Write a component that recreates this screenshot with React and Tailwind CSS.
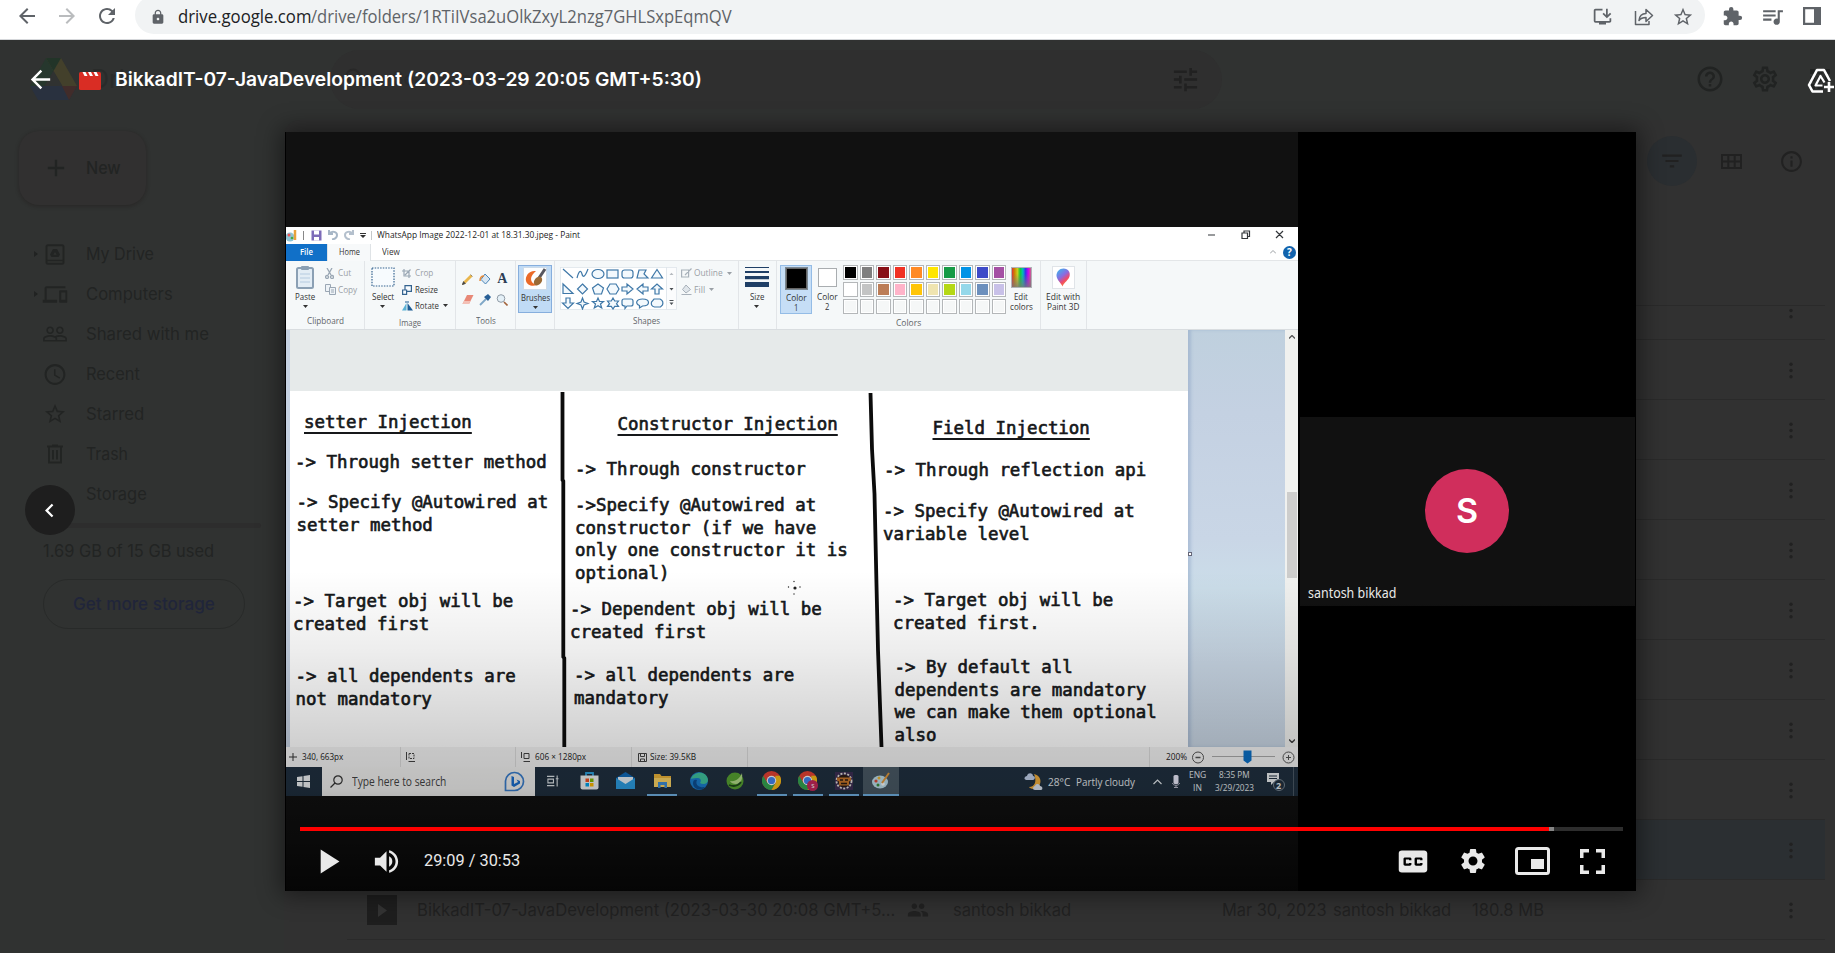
import React, { useLayoutEffect, useRef, useState } from "react";
import {
  MdArrowBack, MdArrowForward, MdRefresh, MdLock, MdInstallDesktop, MdStarBorder, MdExtension,
  MdQueueMusic, MdTune, MdHelpOutline, MdOutlineSettings, MdFilterList, MdInfoOutline,
  MdOutlineDevices, MdPeopleOutline, MdAccessTime, MdPeople, MdClosedCaption, MdSettings,
  MdVolumeUp, MdPlayArrow, MdSearch, MdChevronLeft, MdAdd, MdApps, MdCloudQueue,
} from "react-icons/md";

/* One line of text squeezed or widened to a given width. */
function Fit({ w, className = "", children }) {
  const ref = useRef(null);
  const [k, setK] = useState(1);
  useLayoutEffect(() => {
    if (ref.current) setK(w / ref.current.offsetWidth);
  }, [w]);
  return (
    <span className={"inline-block shrink-0 whitespace-pre " + className} style={{ width: w }}>
      <span ref={ref} className="inline-block origin-left whitespace-pre" style={{ transform: `scaleX(${k})` }}>
        {children}
      </span>
    </span>
  );
}

/* ---------- Browser toolbar ---------- */
function BrowserBar() {
  return (
    <div className="flex h-10 w-full shrink-0 border-b border-[#d5d7da] bg-white text-[#5f6368]">
      <div className="flex h-[32px] items-center gap-4 pl-[15px]">
        <MdArrowBack className="size-6" />
        <MdArrowForward className="size-6 text-[#babcbe]" />
        <MdRefresh className="size-6" />
      </div>
      <div className="-mt-1 ml-4 flex h-[38px] w-[1570px] items-center rounded-full bg-[#f1f3f4] pl-[15px] pt-[3px]">
        <MdLock className="size-[16px]" />
        <div className="ml-3 flex flex-1 items-center font-['Open_Sans',sans-serif] text-[17.500px] leading-none">
          <Fit w={133} className="text-[#202124]">drive.google.com</Fit>
          <Fit w={421}>/drive/folders/1RTiIVsa2uOlkZxyL2nzg7GHLSxpEqmQV</Fit>
        </div>
        <MdInstallDesktop className="size-[21px]" />
        <svg className="ml-5 size-[21px]" viewBox="0 0 21 21" fill="none" stroke="currentColor" strokeWidth="1.500" strokeLinejoin="round">
          <path d="M2.500 5v13.500H16V15" />
          <path d="M6 14.500c.5-5 3-7 7-7V3.500l6.500 6-6.500 6v-4c-3.500 0-5.500 1-7 3z" />
        </svg>
        <MdStarBorder className="ml-[18px] mr-[11px] size-[22px]" />
      </div>
      <div className="flex h-[32px] items-center pl-[17px]">
        <MdExtension className="size-[21px]" />
        <MdQueueMusic className="ml-[17px] size-[25px]" />
        <svg className="ml-[18px] size-[18px]" viewBox="0 0 18 18">
          <path fillRule="evenodd" fill="currentColor" d="M0 0h18v18H0zM2.200 2.200v13.600h8.800V2.200z" />
        </svg>
      </div>
    </div>
  );
}

/* ---------- Dimmed Drive page ---------- */
function DriveLogo() {
  return (
    <svg className="h-[42px] w-[47px]" viewBox="0 0 47 42">
      <path d="M16 0L0 28h14.500L31 0z" fill="#26372d" />
      <path d="M16 0h15l16 28H32z" fill="#43402b" />
      <path d="M31 0L23.500 13 16 0z" fill="#223428" />
      <path d="M0 28h47l-8 14H8z" fill="#29313f" />
      <path d="M32 28h15l-8 14z" fill="#412c2a" />
      <path d="M23.500 13l9 15h-18z" fill="#303231" />
    </svg>
  );
}

function NavItem({ icon, label, w, caret }) {
  return (
    <div className="flex h-10 items-center">
      <div className="w-[10px]">
        {caret && <svg className="h-[6px] w-[4px]" viewBox="0 0 4 6"><path d="M0 0l4 3-4 3z" fill="#212322" /></svg>}
      </div>
      <div className="flex w-[42px] items-center pl-[11px] [&>svg]:-translate-x-1/2">
        {icon}
      </div>
      <Fit w={w} className="leading-none">{label}</Fit>
    </div>
  );
}

function Sidebar() {
  return (
    <div className="w-[284px] shrink-0 pt-[11px] font-['Inter',sans-serif] text-[17px] text-[#222423]">
      <div className="ml-[19px] flex h-[74px] w-[127px] items-center rounded-[20px] bg-[#313030] pl-[23px] shadow-[0_1px_4px_rgba(20,10,10,0.3)]">
        <MdAdd className="size-[28px]" />
        <Fit w={35} className="ml-[16px] font-medium leading-none">New</Fit>
      </div>
      <div className="mt-[29px] pl-[34px]">
        <NavItem caret label="My Drive" w={68} icon={
          <svg className="size-[21px]" viewBox="0 0 21 21" fill="none" stroke="currentColor" strokeWidth="2">
            <rect x="2" y="1.200" width="17" height="18.600" rx="1.500" /><path d="M2 16.500h17" strokeWidth="1.500" /><path d="M8.500 5h4l3 5.500-1.500 2.500H7l-1.500-2.500z" fill="currentColor" stroke="none" /><path d="M10.500 8l1.600 2.700H8.900z" fill="#303231" stroke="none" />
          </svg>} />
        <NavItem caret label="Computers" w={87} icon={<MdOutlineDevices className="size-[25px]" />} />
        <NavItem label="Shared with me" w={123} icon={<MdPeopleOutline className="size-[26px]" />} />
        <NavItem label="Recent" w={54} icon={<MdAccessTime className="size-[25px]" />} />
        <NavItem label="Starred" w={58} icon={<MdStarBorder className="size-[24px]" />} />
        <NavItem label="Trash" w={42} icon={
          <svg className="size-[20px]" viewBox="0 0 20 20" fill="none" stroke="currentColor" strokeWidth="1.800">
            <path d="M2 2.500h16M7 1.500h6M4 3v15.500h12V3M8 6v9.500M12 6v9.500" />
          </svg>} />
        <NavItem label="Storage" w={61} icon={<MdCloudQueue className="size-[24px]" />} />
      </div>
      <div className="ml-[43px] mt-[9px] h-[5px] w-[218px] rounded-full bg-[#2d2d2d]" />
      <div className="ml-[43px] mt-[15px] leading-none"><Fit w={171}>1.69 GB of 15 GB used</Fit></div>
      <div className="ml-[43px] mt-[19px] flex h-[50px] w-[202px] items-center justify-center rounded-full border border-[#282a29] text-[#20253a]">
        <Fit w={142} className="font-medium leading-none">Get more storage</Fit>
      </div>
    </div>
  );
}

function Dots() {
  return (
    <svg className="h-[17px] w-[4px]" viewBox="0 0 4 17" fill="#212121">
      <circle cx="2" cy="2.200" r="1.700" /><circle cx="2" cy="8.500" r="1.700" /><circle cx="2" cy="14.800" r="1.700" />
    </svg>
  );
}

function FileRow({ selected, children }) {
  return (
    <div className={"flex h-[60px] shrink-0 items-center justify-end border-b border-[#2a2a2a] pr-[32px] pt-px " + (selected ? "bg-[#2b2f32]" : "")}>
      {children}
      <Dots />
    </div>
  );
}

function DrivePage() {
  return (
    <div className="flex h-full w-full flex-col bg-[#303231]">
      <div className="flex h-20 shrink-0 items-center pb-[2px] text-[#212322]">
        <div className="ml-[30px] flex w-[300px] items-center font-['Inter',sans-serif]">
          <DriveLogo />
          <span className="ml-[14px] text-[25px] leading-none text-[#292b2a]">Drive</span>
        </div>
        <div className="flex h-[59px] w-[892px] items-center rounded-full bg-[#2f2f2f] font-['Inter',sans-serif] text-[18px] text-[#282828]">
          <MdSearch className="ml-[12px] size-[28px]" />
          <span className="ml-[22px] leading-none text-[#2a2a2a]">Search in Drive</span>
          <MdTune className="ml-auto mr-[21px] size-[31px] text-[#212121]" />
        </div>
        <MdHelpOutline className="ml-[473px] size-[30px]" />
        <MdOutlineSettings className="ml-[25px] size-[30px]" />
        <MdApps className="ml-[25px] size-[30px]" />
      </div>
      <div className="flex min-h-0 flex-1">
        <Sidebar />
        <div className="flex flex-1 flex-col overflow-hidden rounded-tl-2xl bg-[#313131] pl-[63px] pr-[10px]">
          <div className="h-[186px] shrink-0 border-b border-[#2a2a2a] pt-4">
            <div className="flex items-center justify-end pr-[21px] text-[#212121]">
              <div className="flex size-[50px] items-center justify-center rounded-full bg-[#2a2e31]">
                <MdFilterList className="size-[26px]" />
              </div>
              <svg className="ml-[24px] h-[15px] w-[21px]" viewBox="0 0 21 15" fill="none" stroke="currentColor" strokeWidth="2">
                <path d="M1 1h19v13H1zM1 7.500h19M7.300 1v13M13.700 1v13" />
              </svg>
              <MdInfoOutline className="ml-[37px] size-[25px]" />
            </div>
          </div>
          <div className="flex h-[34px] shrink-0 flex-col justify-end overflow-hidden"><FileRow /></div>
          {[0, 1, 2, 3, 4, 5, 6, 7].map((i) => <FileRow key={i} />)}
          <FileRow selected />
          <FileRow>
            <div className="flex flex-1 items-center pl-5 font-['Inter',sans-serif] text-[17px] leading-none text-[#212121]">
              <div className="flex size-[30px] items-center justify-center bg-[#1e1e1e]">
                <svg className="h-[13px] w-[9px]" viewBox="0 0 9 13"><path d="M0 0l9 6.500L0 13z" fill="#333" /></svg>
              </div>
              <Fit w={478} className="ml-[20px]">BikkadIT-07-JavaDevelopment (2023-03-30 20:08 GMT+5...</Fit>
              <MdPeople className="ml-[12px] size-[22px]" />
              <Fit w={118} className="ml-[24px]">santosh bikkad</Fit>
              <Fit w={105} className="ml-[151px]">Mar 30, 2023</Fit>
              <Fit w={118} className="ml-[6px]">santosh bikkad</Fit>
              <Fit w={72} className="ml-[21px]">180.8 MB</Fit>
            </div>
          </FileRow>
        </div>
      </div>
    </div>
  );
}

/* ---------- Paint window ---------- */
function Caret({ className = "" }) {
  return <svg className={"h-[3px] w-[5px] " + className} viewBox="0 0 5 3"><path d="M0 0h5L2.500 3z" fill="currentColor" /></svg>;
}

function Big({ icon, lines, caret, className = "" }) {
  return (
    <div className={"flex flex-col items-center " + className}>
      <div className="flex h-[24px] items-center">{icon}</div>
      <div className="mt-[3px] flex flex-col items-center">
        {lines.map(([t, w]) => <Fit key={t} w={w} className="h-[10px] leading-[10px]">{t}</Fit>)}
      </div>
      {caret && <Caret className="mt-[3px]" />}
    </div>
  );
}

function Small({ icon, label, w, caret, dim }) {
  return (
    <div className={"flex h-[16.400px] items-center " + (dim ? "text-[#9aa0a6]" : "")}>
      <div className="flex w-[13px] shrink-0 items-center">{icon}</div>
      <Fit w={w} className="leading-none">{label}</Fit>
      {caret && <Caret className="ml-[4px]" />}
    </div>
  );
}

function Group({ w, label, lw, children }) {
  return (
    <div className={"flex shrink-0 flex-col border-r border-[#e2e5e8] pt-[4px] " + w}>
      <div className="flex h-[48px]">{children}</div>
      <div className="mt-[2px] flex h-[16px] shrink-0 items-center justify-center text-[#5f6468]">
        {label && <Fit w={lw} className="leading-none">{label}</Fit>}
      </div>
    </div>
  );
}

function ShapesGallery() {
  return (
    <svg className="h-[43px] w-[117px]" viewBox="0 0 117 43" fill="#f3f9fd" stroke="#3f78a8" strokeWidth="1.200">
      <rect x=".5" y=".5" width="106" height="42" fill="#fff" stroke="#dfe5ea" strokeWidth=".8" />
      <rect x="106.500" y=".5" width="10" height="42" fill="#fbfcfd" stroke="#dfe5ea" strokeWidth=".8" />
      <path d="M3 2l10 9" />
      <path d="M17 11c2-8 4-8 5-4s3 3 6-5" fill="none" />
      <ellipse cx="38" cy="7" rx="6" ry="4.500" />
      <rect x="47" y="3" width="11" height="8" />
      <rect x="62" y="3" width="11" height="8" rx="2.500" />
      <path d="M77 11l2-8h7l-2 4 4 4z" />
      <path d="M97 2.500l5.500 8.500h-11z" />
      <path d="M3 17v9.500h10z" />
      <path d="M22.500 17l5 5-5 5-5-5z" />
      <path d="M38 17l5.500 4-2 6h-7l-2-6z" />
      <path d="M50 17h6l3 5-3 5h-6l-3-5z" />
      <path d="M62 20h5v-3l6 5-6 5v-3h-5z" />
      <path d="M88 20h-5v-3l-6 5 6 5v-3h5z" />
      <path d="M95 27v-5h-3.500l5.500-5 5.500 5H99v5z" />
      <path d="M6 31v5H2.500l5.500 5.500 5.500-5.500H10v-5z" />
      <path d="M22.500 31l1.500 4 4 1.500-4 1.500-1.500 4-1.500-4-4-1.500 4-1.500z" />
      <path d="M38 31l1.500 3.500h4l-3 2.500 1.200 4-3.700-2.300-3.700 2.300 1.200-4-3-2.500h4z" />
      <path d="M53 31l1.700 3h3.800l-2 2.700 2 2.700h-3.800l-1.700 2.600-1.700-2.600h-3.800l2-2.700-2-2.700h3.800z" />
      <path d="M64 32h7q2 0 2 2v3q0 2-2 2h-4l-2 2.500V39q-3 0-3-2v-3q0-2 2-2z" />
      <path d="M82.500 32c8 0 8 7 0 7l-3 2v-2.500c-5-2-3-6.500 3-6.500z" />
      <path d="M94 32h6q4 2 2.500 6l-2 2h-6q-4-1-3-5z" />
      <path d="M109.500 8h4l-2-2.200z" fill="#b5babf" stroke="none" />
      <path d="M109.500 21h4l-2 2.400zM109.500 35.500h4l-2 2.400zM109.500 33h4v1h-4z" fill="#4b5055" stroke="none" />
    </svg>
  );
}

const PALETTE = [
  "bg-[#000000]", "bg-[#7f7f7f]", "bg-[#880f16]", "bg-[#f03022]", "bg-[#ff8a25]", "bg-[#ffe600]", "bg-[#169b46]", "bg-[#0093e6]", "bg-[#3d4ac8]", "bg-[#a450a4]",
  "bg-[#ffffff]", "bg-[#c3c4c4]", "bg-[#bc7d57]", "bg-[#ffb3c9]", "bg-[#ffc508]", "bg-[#efe4b0]", "bg-[#b5d816]", "bg-[#94d8ea]", "bg-[#6c90bd]", "bg-[#c8c1e8]",
  "bg-[#f5f7f7]", "bg-[#f5f7f7]", "bg-[#f5f7f7]", "bg-[#f5f7f7]", "bg-[#f5f7f7]", "bg-[#f5f7f7]", "bg-[#f5f7f7]", "bg-[#f5f7f7]", "bg-[#f5f7f7]", "bg-[#f5f7f7]",
];

function Ribbon() {
  return (
    <div className="flex h-[69px] shrink-0 border-b border-[#d9dde0] bg-[#f5f8f9]">
      <Group w="w-[79px]" label="Clipboard" lw={37}>
        <Big className="ml-[9px] w-[20px]" caret lines={[["Paste", 20]]} icon={
          <svg className="h-[23px] w-[18px]" viewBox="0 0 18 23">
            <rect x="1" y="2" width="16" height="20" rx="1.500" fill="#e3edf5" stroke="#8ba0b4" strokeWidth="2" />
            <rect x="5" y="0" width="8" height="4" rx="1" fill="#8ba0b4" />
            <path d="M4 8h10M4 12h10M4 16h10" stroke="#b5cbe0" />
          </svg>} />
        <div className="ml-[10px]">
          <Small dim label="Cut" w={13} icon={<svg className="h-[11px] w-[9px]" viewBox="0 0 9 11" fill="none" stroke="#9aa7b4" strokeWidth="1.300"><path d="M2 0l4 7M7 0L3 7" /><circle cx="2" cy="9" r="1.500" /><circle cx="7" cy="9" r="1.500" /></svg>} />
          <Small dim label="Copy" w={19} icon={<svg className="h-[11px] w-[11px]" viewBox="0 0 11 11" fill="#eef3f7" stroke="#9aa7b4"><path d="M.5.5h5v7h-5z" /><path d="M4.500 3.500h6v7h-6zM6 6h3M6 8h3" /></svg>} />
        </div>
      </Group>
      <Group w="w-[91px]" label="Image" lw={22}>
        <Big className="ml-[6px] w-[23px]" caret lines={[["Select", 22]]} icon={
          <svg className="h-[20px] w-[24px]" viewBox="0 0 24 20"><rect x="1" y="1" width="22" height="18" fill="#f7fbfe" stroke="#34638f" strokeWidth="1.200" strokeDasharray="1.500 1.200" /></svg>} />
        <div className="ml-[8px]">
          <Small dim label="Crop" w={18} icon={<svg className="size-[9px]" viewBox="0 0 9 9" fill="none" stroke="#9aa7b4" strokeWidth="1.200"><path d="M2 0v7h7M0 2h7v7M8.500 .5L3 6" /></svg>} />
          <Small label="Resize" w={23} icon={<svg className="size-[10px]" viewBox="0 0 10 10" fill="#f7fbfe" stroke="#34638f" strokeWidth="1.200"><path d="M3 .6h6.400v5.800H3z" /><path d="M.6 5h4v4.400h-4z" /></svg>} />
          <Small label="Rotate" w={24} caret icon={<svg className="h-[10px] w-[11px]" viewBox="0 0 11 10"><path d="M0 9.500h4.500V2z" fill="#5bb2d6" /><path d="M5.500 2l5.500 7.500H5.500z" fill="#1d5d95" /><path d="M3 1h4" stroke="#1d5d95" /></svg>} />
        </div>
      </Group>
      <Group w="w-[60px]" label="Tools" lw={20}>
        <div className="ml-[3px] mt-[3px] grid h-[42px] w-[52px] grid-cols-3 place-items-center text-[11px]">
          <svg className="size-[11px]" viewBox="0 0 11 11"><path d="M0 11l1.500-3.500L8.500.5l2 2-7 7z" fill="#e9b64d" /><path d="M0 11l1.500-3.500 2 2zM8.500.5l2 2" fill="#444" stroke="#555" strokeWidth=".6" /></svg>
          <svg className="size-[12px]" viewBox="0 0 12 12"><path d="M6 1l5 5-4.500 5L2 6.500z" fill="#d8e6f2" stroke="#4c86b8" /><path d="M1 8q0-5 4-5" stroke="#e58a3a" strokeWidth="1.500" fill="none" /></svg>
          <span className="font-['Liberation_Serif',serif] text-[14px] font-bold leading-none text-[#2c3e55]">A</span>
          <svg className="h-[10px] w-[12px]" viewBox="0 0 12 10"><path d="M5 0h6.500L7 9H.500z" fill="#e88877" /><path d="M.5 9L2 6h6.500L7 9z" fill="#f3c0b6" /></svg>
          <svg className="size-[12px]" viewBox="0 0 12 12"><path d="M1 11l6-6" stroke="#7fa7c7" strokeWidth="1.800" /><path d="M5 3l4 4 3-4-3-3z" fill="#285f96" /></svg>
          <svg className="size-[12px]" viewBox="0 0 12 12"><circle cx="5" cy="4.500" r="3.800" fill="#e4f0f7" stroke="#8f9aa5" /><path d="M8 8l3.500 3.500" stroke="#a2633b" strokeWidth="1.600" /></svg>
        </div>
      </Group>
      <Group w="w-[39px]">
        <div className="ml-[2px] h-[48px] w-[34px] border border-[#86aedd] bg-[#c0dbf5]">
          <Big caret lines={[["Brushes", 29]]} icon={
            <svg className="h-[23px] w-[24px]" viewBox="0 0 24 23">
              <rect x=".5" y=".5" width="23" height="22" fill="#fdfefe" stroke="#cddbe8" />
              <path d="M13 4C6 3 2 9 3 14c1 4 6 6 11 4-4-1-6-3-6-6s2-5 5-8z" fill="#ea6a28" />
              <path d="M22 2l-6 9" stroke="#56565f" strokeWidth="3" />
              <ellipse cx="15" cy="14" rx="5" ry="3.500" fill="#9a6a35" transform="rotate(-50 15 14)" />
            </svg>} />
        </div>
      </Group>
      <Group w="w-[184px]" label="Shapes" lw={27}>
        <div className="ml-[5px] mt-[2px]"><ShapesGallery /></div>
        <div className="ml-[4px]">
          <Small dim caret label="Outline" w={29} icon={<svg className="h-[10px] w-[11px]" viewBox="0 0 11 10" fill="none" stroke="#a8b1ba" strokeWidth="1.200"><path d="M.6 2h7v7h-7zM10.500 .5L4 7" /></svg>} />
          <Small dim caret label="Fill" w={11} icon={<svg className="h-[11px] w-[11px]" viewBox="0 0 11 11" fill="#dfe5ea" stroke="#a8b1ba"><path d="M5 1l4.500 4.500L5 9 1.500 5.500zM.5 10.500h10" /></svg>} />
        </div>
      </Group>
      <Group w="w-[38px]">
        <Big className="ml-[5px] w-[25px]" caret lines={[["Size", 14]]} icon={
          <svg className="h-[22px] w-[24px]" viewBox="0 0 24 22" fill="#1f3f66"><path d="M0 1h24v1H0zM0 5h24v2H0zM0 10h24v3.200H0zM0 16h24v5H0z" /></svg>} />
      </Group>
      <Group w="w-[264px]" label="Colors" lw={25}>
        <div className="ml-[3px] h-[49px] w-[32px] shrink-0 border border-[#94bce6] bg-[#c6def6]">
          <Big lines={[["Color", 21], ["1", 4]]} icon={<div className="size-[23px] border border-[#7a8791] bg-black outline-1 -outline-offset-2 outline-white/40" />} />
        </div>
        <Big className="ml-[3px] w-[24px]" lines={[["Color", 21], ["2", 4]]} icon={<div className="size-[19px] border border-[#a9adb0] bg-white" />} />
        <div className="ml-[4px] grid h-[49px] w-[163px] grid-cols-10 gap-x-[2px] gap-y-[2px]">
          {PALETTE.map((c, i) => (
            <div key={i} className="border border-[#b4b7b9] bg-white p-px"><div className={"h-full w-full " + c} /></div>
          ))}
        </div>
        <Big className="ml-[3px] w-[24px]" lines={[["Edit", 14], ["colors", 23]]} icon={
          <div className="size-[21px] border border-[#b0b4b8] bg-[linear-gradient(to_bottom,transparent_30%,rgba(120,120,120,0.8)),linear-gradient(to_right,#d33,#c80,#cc2,#1c3,#0bb,#33e,#c0e,#c68)]" />} />
      </Group>
      <Group w="w-[46px]">
        <Big className="ml-[4px] w-[36px]" lines={[["Edit with", 34], ["Paint 3D", 32]]} icon={
          <svg className="h-[23px] w-[23px]" viewBox="0 0 23 23">
            <defs><linearGradient id="p3" x1="0" y1="0" x2=".6" y2="1"><stop offset="0" stopColor="#2fc0f0" /><stop offset=".5" stopColor="#8a6be0" /><stop offset=".75" stopColor="#f0496a" /><stop offset="1" stopColor="#f58a2c" /></linearGradient></defs>
            <rect x=".5" y=".5" width="22" height="22" fill="#fff" stroke="#e0e4e8" />
            <path d="M11.500 2.500c5 0 7 4 6 8-1 4-5 5-7 10-1-3-5.500-6-6-10.500-.3-4 3-7.500 7-7.500z" fill="url(#p3)" />
          </svg>} />
      </Group>
    </div>
  );
}

function PaintTitle() {
  return (
    <>
      <div className="flex h-[17px] shrink-0 items-center bg-white pb-px text-[#3a3d40]">
        <svg className="h-[13px] w-[11px]" viewBox="0 0 11 13"><circle cx="4" cy="8" r="4.500" fill="#8fc4d4" /><circle cx="3" cy="6" r="1.500" fill="#e55" /><circle cx="6" cy="9" r="1.300" fill="#4a4" /><path d="M9 1v10" stroke="#e9a23c" strokeWidth="2.500" /></svg>
        <div className="ml-[6px] h-[9px] w-px bg-[#888]" />
        <svg className="ml-[7px] size-[11px]" viewBox="0 0 11 11"><path d="M.5.5h10v10H.5z" fill="#7d6bb8" /><path d="M3 .5h5v4H3zM3 7h5v3.500H3z" fill="#fff" /></svg>
        <svg className="ml-[6px] h-[10px] w-[10px]" viewBox="0 0 10 10" fill="none" stroke="#a7b6c6" strokeWidth="2"><path d="M1 0v4h4M1 4c3-4 8-2 8 1s-2 4-5 4.500" /></svg>
        <svg className="ml-[6px] h-[10px] w-[10px]" viewBox="0 0 10 10" fill="none" stroke="#b4c0cd" strokeWidth="2"><path d="M9 0v4H5M9 4C6 0 1 2 1 5s2 4 5 4.500" /></svg>
        <svg className="ml-[6px] h-[5px] w-[6px]" viewBox="0 0 6 5"><path d="M0 0h6v1H0zM0 2h6L3 5z" fill="#333" /></svg>
        <div className="ml-[5px] h-[9px] w-px bg-[#c5c8ca]" />
        <Fit w={203} className="ml-[5px] font-medium leading-none text-[#222]">WhatsApp Image 2022-12-01 at 18.31.30.jpeg - Paint</Fit>
        <svg className="ml-[628px] h-[10px] w-[76px]" viewBox="0 0 76 10" fill="none" stroke="#33373a" strokeWidth="1.200">
          <path d="M0 5h7M34 3h5.500v5.500H34zM36 3V1h5.500v5.500h-2M68 1l7 7M75 1l-7 7" />
        </svg>
      </div>
      <div className="flex h-[17px] shrink-0 items-center border-b border-[#e3e6e8] bg-white">
        <div className="flex h-[17px] w-[41px] items-center justify-center bg-[#1170c8] font-semibold text-white"><Fit w={13} className="leading-none">File</Fit></div>
        <div className="flex h-[17px] w-[44px] items-center justify-center border-x border-[#dfe3e6] bg-[#f7f9fa]"><Fit w={21} className="leading-none">Home</Fit></div>
        <Fit w={18} className="ml-[11px] leading-none">View</Fit>
        <svg className="ml-auto h-[4px] w-[6px]" viewBox="0 0 6 4" fill="none" stroke="#9a9ea2"><path d="M0 3.500L3 .500l3 3" /></svg>
        <div className="ml-[7px] mr-[2px] flex size-[13px] items-center justify-center rounded-full bg-[#1263ad] text-[10px] font-bold leading-none text-white">?</div>
      </div>
    </>
  );
}

/* Free-standing text boxes typed on the Paint canvas. */
function Note({ at, children }) {
  return <div className={"absolute whitespace-pre " + at}>{children}</div>;
}

function PaintCanvas() {
  return (
    <div className="flex h-[417px] shrink-0 bg-[#c6d2e2]">
      <div className="relative ml-[4px] h-full w-[898px] overflow-hidden bg-[#e6eaea] pt-[61px]">
        <div className="h-full bg-white" />
        <svg className="absolute left-0 top-0 h-full w-full" viewBox="0 0 898 417" fill="none" stroke="#0c0c0c" strokeWidth="3.800" strokeLinejoin="round">
          <path d="M272.500 62v88l.8 1v176l1 1v89" />
          <path d="M580.500 63l1.500 56 2.500 45 2 91 1.500 65 3.500 97" />
        </svg>
        <div className="font-['DejaVu_Sans_Mono',monospace] text-[17.430px] leading-[22.600px] text-[#16181a] [-webkit-text-stroke:0.65px_#16181a]">
          <Note at="left-[14px] top-[81px] underline decoration-[1.500px] underline-offset-[4px]">setter Injection</Note>
          <Note at="left-[5px] top-[121px]">{"-> Through setter method"}</Note>
          <Note at="left-[6.500px] top-[161px]">{"-> Specify @Autowired at\nsetter method"}</Note>
          <Note at="left-[3px] top-[260px]">{"-> Target obj will be\ncreated first"}</Note>
          <Note at="left-[5.500px] top-[335px]">{"-> all dependents are\nnot mandatory"}</Note>
          <Note at="left-[327.500px] top-[83px] underline decoration-[1.500px] underline-offset-[4px]">Constructor Injection</Note>
          <Note at="left-[285px] top-[128px]">{"-> Through constructor"}</Note>
          <Note at="left-[285px] top-[164px]">{"->Specify @Autowired at\nconstructor (if we have\nonly one constructor it is\noptional)"}</Note>
          <Note at="left-[280px] top-[268px]">{"-> Dependent obj will be\ncreated first"}</Note>
          <Note at="left-[284px] top-[334px]">{"-> all dependents are\nmandatory"}</Note>
          <Note at="left-[642.500px] top-[87px] underline decoration-[1.500px] underline-offset-[4px]">Field Injection</Note>
          <Note at="left-[594px] top-[129px]">{"-> Through reflection api"}</Note>
          <Note at="left-[593px] top-[170px]">{"-> Specify @Autowired at\nvariable level"}</Note>
          <Note at="left-[603px] top-[259px]">{"-> Target obj will be\ncreated first."}</Note>
          <Note at="left-[604.500px] top-[326px]">{"-> By default all\ndependents are mandatory\nwe can make them optional\nalso"}</Note>
        </div>
        <svg className="absolute left-[497px] top-[250px] h-[16px] w-[16px]" viewBox="0 0 16 16" fill="#222">
          <circle cx="8" cy="8" r="1.600" /><circle cx="7" cy="1.500" r=".7" /><circle cx="7" cy="14" r=".7" /><circle cx="1.500" cy="7" r=".7" /><circle cx="13" cy="7" r=".7" />
        </svg>
      </div>
      <div className="flex w-[97px] items-center bg-[linear-gradient(to_bottom,#bfd0de,#c4d1e2_20%,#c9d6e6_50%,#cbdde9_62%,#c8d6e4_80%,#c8d5e3)] shadow-[inset_3px_0_3px_rgba(120,145,185,0.35)]">
        <div className="mt-[30px] size-[4px] border border-[#667] bg-white" />
      </div>
      <div className="flex w-[13px] flex-col items-center bg-[#f0f1ef] pt-[5px]">
        <svg className="h-[4px] w-[6px]" viewBox="0 0 6 4" fill="none" stroke="#555" strokeWidth="1.300"><path d="M0 3.500L3 .500l3 3" /></svg>
        <div className="mt-[153px] h-[86px] w-[10px] bg-[#cdcdcc]" />
        <svg className="mb-[4px] mt-auto h-[4px] w-[6px]" viewBox="0 0 6 4" fill="none" stroke="#444" strokeWidth="1.500"><path d="M0 .500l3 3 3-3" /></svg>
      </div>
    </div>
  );
}

function StatusBar() {
  const sq = "flex h-full items-center border-r border-[#dcdcdc]";
  return (
    <div className="flex h-[20px] shrink-0 items-center bg-[#f4f4f4] text-[9.500px] text-[#222]">
      <div className={sq + " w-[115px] pl-[3px]"}>
        <svg className="size-[8px]" viewBox="0 0 8 8" stroke="#333"><path d="M4 0v8M0 4h8" /></svg>
        <Fit w={41} className="ml-[5px] leading-none">340, 663px</Fit>
      </div>
      <div className={sq + " w-[115px] pl-[4px]"}>
        <svg className="size-[10px]" viewBox="0 0 10 10" fill="none" stroke="#444"><path d="M1.500 0v8M3.500 9.500H10" /><path d="M4 1.500h5v5H4z" strokeDasharray="2 1" /></svg>
      </div>
      <div className={sq + " w-[116px] pl-[4px]"}>
        <svg className="size-[10px]" viewBox="0 0 10 10" fill="none" stroke="#444"><path d="M1.500 0v6M3.500 9.500H10M4 1.500h5v5H4z" /></svg>
        <Fit w={51} className="ml-[5px] leading-none">606 × 1280px</Fit>
      </div>
      <div className={sq + " w-[116px] pl-[6px]"}>
        <svg className="size-[9px]" viewBox="0 0 9 9" fill="none" stroke="#444"><path d="M.5.5h8v8h-8zM2.500.5v3h4v-3M2.500 8V6h4v2" /></svg>
        <Fit w={46} className="ml-[3px] leading-none">Size: 39.5KB</Fit>
      </div>
      <div className="h-full w-[402px] border-r border-[#dcdcdc]" />
      <Fit w={21} className="ml-[16px] leading-none">200%</Fit>
      <svg className="ml-[5px] h-[14px] w-[104px]" viewBox="0 0 104 14" fill="none" stroke="#555">
        <circle cx="6" cy="7.500" r="5.500" /><path d="M3.500 7.500h5" strokeWidth="1.500" />
        <path d="M20 6.500h63" stroke="#aaa" />
        <path d="M51.500.500h8v10l-4 3-4-3z" fill="#0a6fc6" stroke="none" />
        <circle cx="96.500" cy="7.500" r="5.500" /><path d="M94 7.500h5M96.500 5v5" />
      </svg>
    </div>
  );
}

function Chrome() {
  return (
    <svg className="size-[19px]" viewBox="0 0 20 20">
      <circle cx="10" cy="10" r="10" fill="#e94335" />
      <path d="M1.300 5A10 10 0 0010 20l4.300-7.500L5.700 12.500z" fill="#34a853" />
      <path d="M18.700 5A10 10 0 0110 20l4.500-7.700L14 5z" fill="#fbc116" />
      <circle cx="10" cy="10" r="5" fill="#fff" /><circle cx="10" cy="10" r="3.800" fill="#4286f5" />
    </svg>
  );
}

function Slot({ line, active, children }) {
  return (
    <div className={"flex h-full w-[36.400px] shrink-0 flex-col items-center justify-between " + (active ? "bg-[#4a5a66]" : "")}>
      <div className="flex h-[27px] items-center">{children}</div>
      {line && <div className={"h-[2px] bg-[#76b9ed] " + (active ? "w-full" : "w-[30px]")} />}
    </div>
  );
}

function Taskbar() {
  return (
    <div className="flex h-[29px] shrink-0 items-center bg-[#203040] text-[#e8eef2]">
      <svg className="ml-[11px] size-[13px]" viewBox="0 0 13 13" fill="#f2f5f7"><path d="M0 2l5.500-.8V6H0zM6.500 1L13 0v6H6.500zM0 7h5.500v4.800L0 11zM6.500 7H13v6l-6.500-1z" /></svg>
      <div className="ml-[12px] flex h-full w-[213px] items-center bg-[#f3f3f2] text-[#444]">
        <svg className="ml-[8px] size-[13px]" viewBox="0 0 13 13" fill="none" stroke="#333" strokeWidth="1.200"><circle cx="8" cy="5" r="4.200" /><path d="M5 8L.500 12.500" /></svg>
        <Fit w={94} className="ml-[9px] text-[12px] leading-none">Type here to search</Fit>
        <svg className="ml-[58px] size-[21px]" viewBox="0 0 21 21" fill="none"><path d="M1.500 19.500V10a9 9 0 119 9.500z" stroke="#3a7fcf" strokeWidth="1.700" /><path d="M7.500 5l2.500 1v7l4-2-1.500-2.500 3.500 1.500v2.500L10 16l-2.500-1.500z" fill="#1b6fd0" /></svg>
      </div>
      <Slot><svg className="size-[12px]" viewBox="0 0 13 12" fill="none" stroke="#dfe6ea" strokeWidth="1.200"><path d="M0 1h8M0 11h8M1 4h6v4H1zM11 0v12M9.500 3.500h3" /></svg></Slot>
      <Slot><svg className="size-[19px]" viewBox="0 0 19 19"><path d="M6 5V2h7v3" fill="none" stroke="#2ea3e0" strokeWidth="1.800" /><path d="M.5 4.500h18v12q0 2-2 2h-14q-2 0-2-2z" fill="#f2f4f5" /><path d="M5.500 7.500H9V11H5.500z" fill="#f25022" /><path d="M10 7.500h3.500V11H10z" fill="#7fba00" /><path d="M5.500 12H9v3.500H5.500z" fill="#00a4ef" /><path d="M10 12h3.500v3.500H10z" fill="#ffb900" /></svg></Slot>
      <Slot><svg className="h-[17px] w-[19px]" viewBox="0 0 19 17"><path d="M0 6l9.500-6L19 6v11H0z" fill="#0f6cbd" /><path d="M2 5h15v5l-7.500 4L2 10z" fill="#eaf4fb" /><path d="M0 6l9.500 6L19 6v11H0z" fill="#2c9fe5" /></svg></Slot>
      <Slot line><svg className="h-[15px] w-[17px]" viewBox="0 0 17 15"><path d="M0 1h6l1.500 2H17v11H0z" fill="#f0b73a" /><path d="M0 5h17v9H0z" fill="#ffd766" /><path d="M4 15V9h9v6h-2.500v-3h-4v3z" fill="#3f8fd6" /></svg></Slot>
      <Slot><svg className="size-[18px]" viewBox="0 0 18 18"><circle cx="9" cy="9" r="9" fill="#1b7fd0" /><path d="M1 7C3-1 17-2 18 8c0 4-5 5-8 3 2-3 0-5-2-5S3 6 1 7z" fill="#41c6a0" /><path d="M7 8c-2 4 1 8 8 7-4 5-12 2-12-4 0-3 2-4 4-3z" fill="#0d4f94" /></svg></Slot>
      <Slot><svg className="size-[18px]" viewBox="0 0 18 18"><circle cx="9" cy="9" r="8.500" fill="#58a532" /><path d="M16 1c1 8-2 11-6 11-3 0-5-1-6-3 6 1 10-3 12-8z" fill="#b5e08a" /><path d="M3 13c5 2 9 1 12-3" stroke="#1f4a1b" strokeWidth="1.800" fill="none" /></svg></Slot>
      <Slot line><Chrome /></Slot>
      <Slot line>
        <div className="relative"><Chrome /><div className="absolute -bottom-px -right-px flex size-[11px] items-center justify-center rounded-full bg-[#c8285c] text-[7px] leading-none text-white">s</div></div>
      </Slot>
      <Slot line><svg className="size-[18px]" viewBox="0 0 18 18"><rect width="18" height="18" fill="#3d2f55" /><circle cx="9" cy="9" r="7.500" fill="none" stroke="#e6e2da" strokeWidth="1.800" strokeDasharray="2 1.500" /><circle cx="9" cy="9" r="6.200" fill="#2b1c14" /><path d="M2 5.500h14v3l-2 1v4H4v-4l-2-1z" fill="#c9762a" /><path d="M5 8h3M10 8h3M6 11.500h6" stroke="#2b1c14" strokeWidth="1.300" /></svg></Slot>
      <Slot line active><svg className="h-[17px] w-[18px]" viewBox="0 0 18 17"><ellipse cx="8" cy="10" rx="8" ry="6.500" fill="#bfe0ee" /><circle cx="4" cy="9" r="1.600" fill="#e04b3a" /><circle cx="7" cy="6" r="1.500" fill="#f1b632" /><circle cx="6" cy="13" r="1.500" fill="#3b8f3f" /><circle cx="11" cy="12" r="1.800" fill="#fff" /><path d="M10 11l7-10" stroke="#e59a3c" strokeWidth="2" /></svg></Slot>
      <svg className="ml-[125px] h-[18px] w-[19px] shrink-0" viewBox="0 0 19 18"><path d="M10 1c6 1 9 8 4 13-3 3-8 2-9 0 6 0 8-6 5-13z" fill="#f5b13d" /><path d="M2 7c-3-1-1-4 1-4 1-4 6-3 6 0 3 0 2 4 0 4z" fill="#c5d4ee" /><path d="M11 17c-3 0-2-4 0-4 1-3 5-2 5 0 3 0 3 4 1 4z" fill="#dfe8f5" /></svg>
      <Fit w={22} className="ml-[5px] text-[11.500px] leading-none">28°C</Fit>
      <Fit w={59} className="ml-[6px] text-[11.500px] leading-none">Partly cloudy</Fit>
      <svg className="ml-[18px] h-[6px] w-[9px] shrink-0" viewBox="0 0 9 6" fill="none" stroke="currentColor" strokeWidth="1.200"><path d="M.5 5l4-4 4 4" /></svg>
      <svg className="ml-[10px] h-[13px] w-[8px] shrink-0" viewBox="0 0 8 13"><rect x="1.500" width="5" height="9" rx="1.500" fill="#eef" /><path d="M.500 8c0 3 7 3 7 0M4 10v3M2 12.500h4" stroke="#bbc" fill="none" /></svg>
      <div className="ml-[9px] flex w-[18px] flex-col items-center gap-[3px] text-[9.500px] leading-[10px]"><Fit w={17}>ENG</Fit><Fit w={9}>IN</Fit></div>
      <div className="ml-[8px] flex w-[40px] flex-col items-center gap-[3px] text-[9.500px] leading-[10px]"><Fit w={31}>8:35 PM</Fit><Fit w={39}>3/29/2023</Fit></div>
      <svg className="ml-[12px] h-[18px] w-[18px] shrink-0" viewBox="0 0 18 18"><path d="M0 0h12v9H7l-3 3V9H0z" fill="#eef2f4" /><path d="M2 3h8M2 5.500h8" stroke="#203040" /><circle cx="12" cy="12" r="5.500" fill="#203040" stroke="#7a8894" /></svg>
      <span className="-ml-[9px] mt-[8px] text-[9px] font-bold leading-none">2</span>
      <div className="ml-[12px] h-full w-px bg-[#4c5a67]" />
    </div>
  );
}

/* ---------- Video preview ---------- */
function Player() {
  return (
    <div className="relative ml-[285px] h-[759px] w-[1351px] shrink-0 bg-black shadow-[0_0_22px_4px_rgba(0,0,0,0.45)]">
      <div className="flex h-full pl-px">
        <div className="flex h-full w-[1012px] flex-col overflow-hidden bg-[#111111] pt-[95px] font-['Open_Sans',sans-serif] text-[9.500px] text-[#333]">
          <PaintTitle />
          <Ribbon />
          <PaintCanvas />
          <StatusBar />
          <Taskbar />
        </div>
        <div className="flex-1 pl-[2px] pt-[285px]">
          <div className="flex h-[189px] w-[335px] flex-col bg-[#111111]">
            <div className="ml-[125px] mt-[52px] flex size-[84px] items-center justify-center rounded-full bg-[#d02e5c] font-['Inter',sans-serif] text-[34px] font-semibold leading-none text-white">S</div>
            <Fit w={88} className="ml-[8px] mt-[33px] font-['Noto_Sans',sans-serif] text-[14px] leading-none text-[#eee]">santosh bikkad</Fit>
          </div>
        </div>
      </div>
      <div className="absolute inset-x-0 bottom-0 flex h-[320px] flex-col justify-end bg-[linear-gradient(to_bottom,transparent,rgba(0,0,0,0.07)_25%,rgba(0,0,0,0.19)_55%,rgba(0,0,0,0.22)_68%,rgba(0,0,0,0.42)_84%,rgba(0,0,0,0.7))]">
        <div className="ml-[15px] flex h-[4px] w-[1323px] bg-[#2d2d2d]">
          <div className="h-full w-[1249px] bg-[#ff0000]" />
          <div className="h-full w-[5px] bg-[#858585]" />
        </div>
        <div className="flex h-[60px] items-center text-[#e9e9e9]">
          <MdPlayArrow className="ml-[22px] size-[41px]" />
          <MdVolumeUp className="ml-[23px] size-[31px]" />
          <Fit w={96} className="ml-[22px] font-['Roboto',sans-serif] text-[16.500px] leading-none">29:09 / 30:53</Fit>
          <MdClosedCaption className="ml-auto h-[33px] w-[38px]" preserveAspectRatio="none" />
          <MdSettings className="ml-[26px] size-[30px]" />
          <svg className="ml-[27px] h-[28px] w-[35px]" viewBox="0 0 35 28"><rect x="1.500" y="1.500" width="32" height="25" rx="2" fill="none" stroke="currentColor" strokeWidth="3" /><path d="M16 12h13v10H16z" fill="currentColor" /></svg>
          <svg className="ml-[30px] mr-[31px] size-[25px]" viewBox="0 0 25 25" fill="none" stroke="currentColor" strokeWidth="3.500"><path d="M1.750 9V1.750H9M16 1.750h7.250V9M23.250 16v7.250H16M9 23.250H1.750V16" /></svg>
        </div>
      </div>
    </div>
  );
}

function Preview() {
  return (
    <div className="absolute inset-0 flex flex-col overflow-hidden">
      <div className="flex h-[92px] shrink-0 items-start">
        <div className="flex h-[79px] w-full items-center text-white">
          <MdArrowBack className="ml-[26px] size-[29px]" />
          <svg className="ml-[24px] mt-[2px] h-[18px] w-[22px]" viewBox="0 0 22 18"><rect width="22" height="18" rx="1.500" fill="#d92d24" /><path d="M3.500 0h3l2 4h-3zM9 0h3l2 4h-3zM14.500 0h3l2 4h-3z" fill="#fff" /></svg>
          <Fit w={587} className="ml-[14px] -mt-px font-['Inter',sans-serif] text-[19px] font-semibold leading-none">BikkadIT-07-JavaDevelopment (2023-03-29 20:05 GMT+5:30)</Fit>
          <svg className="ml-auto mt-[2px] h-[26px] w-[28px]" viewBox="0 0 28 26" fill="none" stroke="#fff" strokeWidth="2.600" strokeLinejoin="round">
            <path d="M23 13L17 2h-7L2 17l3.500 6.500H16" /><path d="M17.500 14.500L13.500 8 8.500 17.500h7" strokeWidth="2.200" /><path d="M22 14v10M17 19h10" />
          </svg>
        </div>
      </div>
      <Player />
      <div className="absolute left-[25px] top-[445px] flex size-[50px] items-center justify-center rounded-full bg-[#1e1e1e] text-white">
        <MdChevronLeft className="-ml-px size-[27px]" />
      </div>
    </div>
  );
}

export default function App() {
  return (
    <div className="flex h-[953px] w-[1835px] flex-col overflow-hidden">
      <BrowserBar />
      <div className="relative min-h-0 flex-1 overflow-hidden">
        <DrivePage />
        <Preview />
      </div>
    </div>
  );
}
